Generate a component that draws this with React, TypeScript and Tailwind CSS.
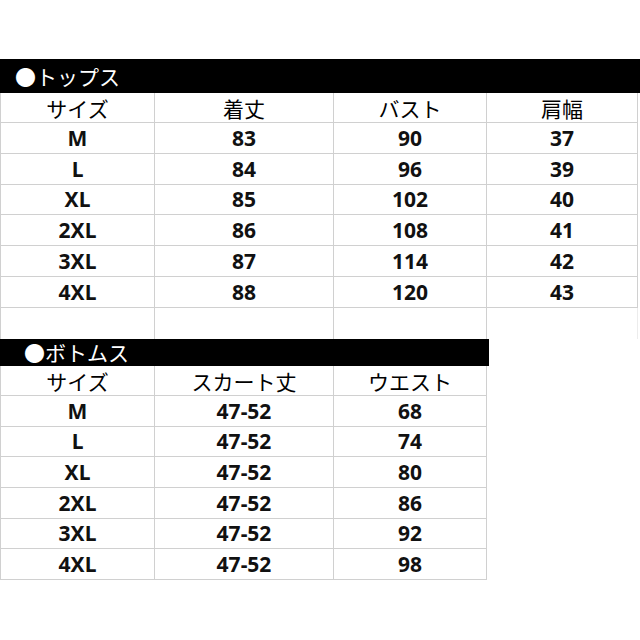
import React from 'react';

const jp = '"Noto Sans CJK JP", "Noto Sans", sans-serif';
const num = '"Noto Sans", "Noto Sans CJK JP", sans-serif';

const tops = [
    ['M', '83', '90', '37'],
    ['L', '84', '96', '39'],
    ['XL', '85', '102', '40'],
    ['2XL', '86', '108', '41'],
    ['3XL', '87', '114', '42'],
    ['4XL', '88', '120', '43'],
];

const bottoms = [
    ['M', '47-52', '68'],
    ['L', '47-52', '74'],
    ['XL', '47-52', '80'],
    ['2XL', '47-52', '86'],
    ['3XL', '47-52', '92'],
    ['4XL', '47-52', '98'],
];

const cell = 'flex items-center justify-center border-r border-b border-[#d0d0d0]';

const HeadCell = ({ text, first }: { text: string; first?: boolean }) => (
    <div className={`${cell} ${first ? 'border-l' : ''} text-[21px] text-black font-normal`} style={{ fontFamily: jp }}>
        <span className="leading-none pt-[2px]">{text}</span>
    </div>
);

const DataCell = ({ text, first }: { text: string; first?: boolean }) => (
    <div className={`${cell} ${first ? 'border-l' : ''} text-[21px] font-bold text-[#111]`} style={{ fontFamily: num }}>
        <span className="leading-none">{text}</span>
    </div>
);

export default function App() {
    return (
        <div className="w-[640px] h-[640px] bg-white pt-[59px] overflow-hidden">
            {/* トップス */}
            <div className="h-[34px] w-full bg-black flex items-center pl-[15px] text-white text-[21px] leading-none" style={{ fontFamily: jp }}>
                ●トップス
            </div>
            <div className="grid grid-cols-[155px_179px_153px_151px] grid-rows-[30px_31px_31px_30px_31px_31px_31px_31px]">
                <HeadCell text="サイズ" first />
                <HeadCell text="着丈" />
                <HeadCell text="バスト" />
                <HeadCell text="肩幅" />
                {tops.map((r) =>
                    r.map((v, i) => <DataCell key={r[0] + i} text={v} first={i === 0} />)
                )}
                <div className="border-l border-r border-[#d0d0d0]" />
                <div className="border-r border-[#d0d0d0]" />
                <div className="border-r border-[#d0d0d0]" />
                <div className="border-r border-[#ececec]" />
            </div>

            {/* ボトムス */}
            <div className="h-[27px] w-[489px] bg-black flex items-center pl-[24px] text-white text-[21px] leading-none" style={{ fontFamily: jp }}>
                ●ボトムス
            </div>
            <div className="grid grid-cols-[155px_179px_153px] grid-rows-[30px_31px_30px_31px_31px_30px_31px]">
                <HeadCell text="サイズ" first />
                <HeadCell text="スカート丈" />
                <HeadCell text="ウエスト" />
                {bottoms.map((r) =>
                    r.map((v, i) => <DataCell key={r[0] + i} text={v} first={i === 0} />)
                )}
            </div>
        </div>
    );
}
